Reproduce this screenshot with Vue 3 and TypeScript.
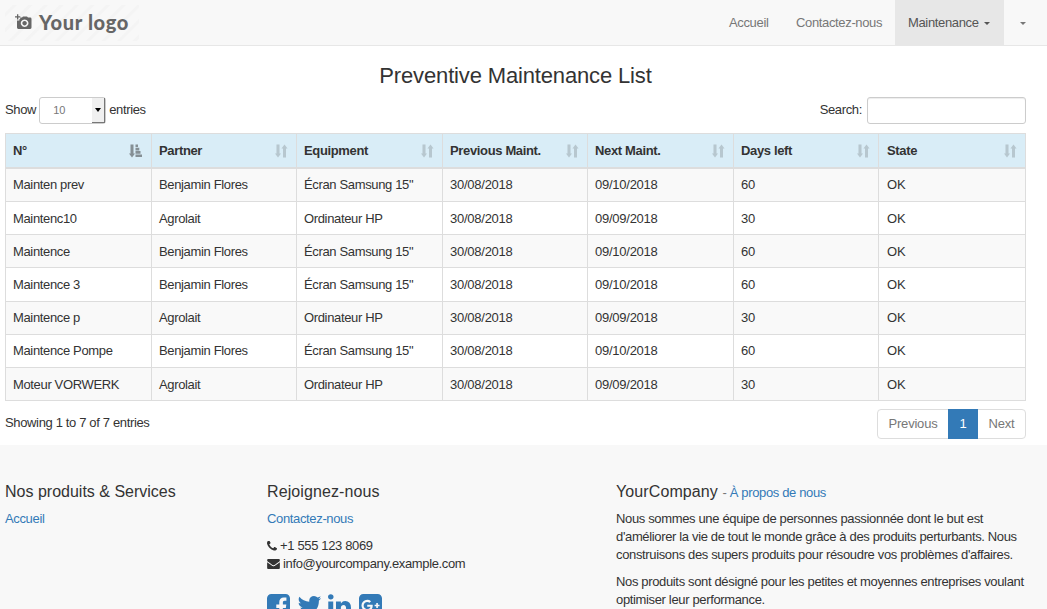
<script setup lang="ts">
interface Row {
  name: string
  partner: string
  equipment: string
  previous: string
  next: string
  days: number
  state: string
}

const columns: string[] = ['N°', 'Partner', 'Equipment', 'Previous Maint.', 'Next Maint.', 'Days left', 'State']

const flores = (name: string): Row => ({
  name, partner: 'Benjamin Flores', equipment: 'Écran Samsung 15"',
  previous: '30/08/2018', next: '09/10/2018', days: 60, state: 'OK',
})
const agrolait = (name: string): Row => ({
  name, partner: 'Agrolait', equipment: 'Ordinateur HP',
  previous: '30/08/2018', next: '09/09/2018', days: 30, state: 'OK',
})

const rows: Row[] = [
  flores('Mainten prev'),
  agrolait('Maintenc10'),
  flores('Maintence'),
  flores('Maintence 3'),
  agrolait('Maintence p'),
  flores('Maintence Pompe'),
  agrolait('Moteur VORWERK'),
]

const social: { name: string; path: string }[] = [
  { name: 'facebook', path: 'M1376 128q119 0 203.5 84.5t84.5 203.5v960q0 119-84.5 203.5t-203.5 84.5h-188v-595h199l30-232h-229v-148q0-56 23.5-84t91.5-28l122-1v-207q-63-9-178-9-136 0-217.5 80t-81.5 226v171h-200v232h200v595h-532q-119 0-203.5-84.5t-84.5-203.5v-960q0-119 84.5-203.5t203.5-84.5h960z' },
  { name: 'twitter', path: 'M1684 408q-67 98-162 167 1 14 1 42 0 130-38 259.5t-115.5 248.5-184.5 210.5-258 146-323 54.5q-271 0-496-145 35 4 78 4 225 0 401-138-105-2-188-64.5t-114-159.5q33 5 61 5 43 0 85-11-112-23-185.5-111.5t-73.5-205.5v-4q68 38 146 41-66-44-105-115t-39-154q0-88 44-163 121 149 294.5 238.5t371.5 99.5q-8-38-8-74 0-134 94.5-228.5t228.5-94.5q140 0 236 102 109-21 205-78-37 115-142 178 93-10 186-50z' },
  { name: 'linkedin', path: 'M477 625v991h-330v-991h330zm21-306q1 73-50.5 122t-135.5 49h-2q-82 0-132-49t-50-122q0-74 51.5-122.5t134.5-48.5 133 48.5 51 122.5zm1166 729v568h-329v-530q0-105-40.5-164.5t-126.5-59.5q-63 0-105.5 34.5t-63.5 85.5q-11 30-11 81v553h-329q2-399 2-647t-1-296l-1-48h329v144h-2q20-32 41-56t56.5-52 87-43.5 114.5-15.5q171 0 275 113.5t104 332.5z' },
  { name: 'google-plus', path: 'M1045 905q0-26-6-64h-362v132h217q-3 24-16.5 50t-37.5 53-66.5 44.5-96.5 17.5q-99 0-169-71t-70-171 70-171 169-71q92 0 153 59l104-101q-108-100-257-100-160 0-272 112.5t-112 271.5 112 271.5 272 112.5q165 0 266.5-105t101.5-270zm345 46h109v-110h-109v-110h-110v110h-110v110h110v110h110v-110zm274-535v960q0 119-84.5 203.5t-203.5 84.5h-960q-119 0-203.5-84.5t-84.5-203.5v-960q0-119 84.5-203.5t203.5-84.5h960q119 0 203.5 84.5t84.5 203.5z' },
]
</script>

<template>
  <div class="page">
    <header class="navbar">
      <a class="logo">
        <svg class="camera" viewBox="0 0 17 16">
          <path fill-rule="evenodd" d="M5.2 3.6H7L8 2.6h4l1 1h2.200q1.300 0 1.300 1.300v8.700q0 1.400-1.300 1.400H3.300Q2 15 2 13.600V6.600h2.400V5h.8zM9.600 5.400a3.800 3.800 0 1 0 .01 0zM9.600 7a2.200 2.200 0 1 1-.01 0z" />
          <path d="M2 .3h1.300v2H5.300v1.300H3.300v2H2V3.600H0V2.300H2z" />
        </svg>
        <span class="logo-text">Your logo</span>
      </a>
      <nav class="menu">
        <a class="item">Accueil</a>
        <a class="item">Contactez-nous</a>
        <a class="item active">Maintenance<i class="caret"></i></a>
        <a class="item"><i class="caret"></i></a>
      </nav>
    </header>

    <main class="content">
      <h3 class="title">Preventive Maintenance List</h3>
      <div class="controls">
        <div class="length">
          <span>Show</span>
          <div class="select"><span class="value">10</span><span class="arrow"><i></i></span></div>
          <span>entries</span>
        </div>
        <label class="search">Search:<input type="text" /></label>
      </div>

      <table class="list">
        <colgroup>
          <col class="first" /><col /><col class="wide" /><col /><col class="wide" /><col /><col class="last" />
        </colgroup>
        <thead>
          <tr>
            <th v-for="(column, i) in columns" :key="column">
              <div class="head">
                <span>{{ column }}</span>
                <svg v-if="i === 0" class="sort sorted" viewBox="0 0 13 14">
                  <path d="M1.500.5h3v9H6L3 13.500 0 9.500h1.500zM6.500.5h2.500v2.600H6.500zM6.500 3.800h3.800v2.600H6.500zM6.500 7.100h5v2.600h-5zM6.500 10.400H13V13H6.500z" />
                </svg>
                <svg v-else class="sort" viewBox="0 0 13 14">
                  <path d="M1.500.5h3v9H6L3 13.500 0 9.500h1.500zM8 13.500V4.500H6.500L9.500.5l3 4H11v9z" />
                </svg>
              </div>
            </th>
          </tr>
        </thead>
        <tbody>
          <tr v-for="row in rows" :key="row.name">
            <td>{{ row.name }}</td>
            <td>{{ row.partner }}</td>
            <td>{{ row.equipment }}</td>
            <td class="date">{{ row.previous }}</td>
            <td class="date">{{ row.next }}</td>
            <td class="date">{{ row.days }}</td>
            <td class="state">{{ row.state }}</td>
          </tr>
        </tbody>
      </table>

      <div class="summary">
        <span class="info">Showing 1 to 7 of 7 entries</span>
        <div class="pagination"><a class="prev">Previous</a><a class="current">1</a><a class="next">Next</a></div>
      </div>
    </main>

    <footer class="footer">
      <section class="products">
        <h4>Nos produits &amp; Services</h4>
        <a class="link">Accueil</a>
      </section>
      <section class="contact">
        <h4>Rejoignez-nous</h4>
        <a class="link">Contactez-nous</a>
        <div class="details">
          <div class="line">
            <svg class="phone" viewBox="192 256 1408 1280"><path d="M1600 1240q0 27-10 70.5t-21 68.5q-21 50-122 106-94 51-186 51-27 0-53-3.5t-57.5-12.5-47-14.5-55.5-20.5-49-18q-98-35-175-83-127-79-264-216t-216-264q-48-77-83-175-3-9-18-49t-20.5-55.5-14.5-47-12.5-57.5-3.5-53q0-92 51-186 56-101 106-122 25-11 68.5-21t70.5-10q14 0 21 3 18 6 53 76 11 19 30 54t35 63.500 31 53.500q3 4 17.500 25t21.500 35.500 7 28.500q0 20-28.500 50t-62 55-62 53-28.500 46q0 9 5 22.500t8.500 20.500 14 24 11.500 19q76 137 174 235t235 174q2 1 19 11.500t24 14 20.500 8.500 22.500 5q18 0 46-28.500t53-62 55-62 50-28.500q14 0 28.500 7t35.500 21.500 25 17.500q25 15 53.500 31t63.500 35 54 30q70 35 76 53 3 7 3 21z" /></svg>
            <span>+1 555 123 8069</span>
          </div>
          <div class="line">
            <svg class="envelope" viewBox="0 256 1792 1408"><path d="M1792 710v794q0 66-47 113t-113 47h-1472q-66 0-113-47t-47-113v-794q44 49 101 87 362 246 497 345 57 42 92.5 65.5t94.5 48 110 24.5h2q51 0 110-24.5t94.5-48 92.5-65.5q170-123 498-345 57-39 100-87zm0-294q0 79-49 151t-122 123q-376 261-468 325-10 7-42.5 31t-54 38.5-52 32.5-57.5 27-50 9h-2q-23 0-50-9t-57.5-27-52-32.5-54-38.5-42.5-31q-91-64-262-182.5t-205-142.5q-62-42-117-115.5t-55-136.5q0-78 41.5-130t118.5-52h1472q65 0 112.5 47t47.5 113z" /></svg>
            <span>info@yourcompany.example.com</span>
          </div>
        </div>
        <div class="social">
          <svg v-for="icon in social" :key="icon.name" :class="icon.name" viewBox="128 128 1536 1536"><path :d="icon.path" /></svg>
        </div>
      </section>
      <section class="about">
        <h4>YourCompany <small>- <a class="link">À propos de nous</a></small></h4>
        <p>Nous sommes une équipe de personnes passionnée dont le but est<br />d'améliorer la vie de tout le monde grâce à des produits perturbants. Nous<br />construisons des supers produits pour résoudre vos problèmes d'affaires.</p>
        <p>Nos produits sont désigné pour les petites et moyennes entreprises voulant<br />optimiser leur performance.</p>
      </section>
    </footer>
  </div>
</template>

<style>
body {
  overflow: hidden;
}
</style>

<style scoped>
.page {
  height: 609px;
  overflow: hidden;
  display: flex;
  flex-direction: column;
  background: #fff;
  color: #333;
  font: 13px/18px "Liberation Sans", Arial, sans-serif;
  letter-spacing: -0.35px;
}
.page * {
  box-sizing: border-box;
}
.navbar {
  flex: none;
  height: 46px;
  display: flex;
  justify-content: space-between;
  background: #f8f8f8;
  border-bottom: 1px solid #e7e7e7;
}
.logo {
  display: flex;
  align-items: center;
  width: 134px;
  height: 36px;
  margin: 5px 0 0 5px;
  padding-left: 10px;
  color: #666;
  background: repeating-linear-gradient(135deg, #f8f8f8 0 5px, #f4f4f4 6px 8px, #f8f8f8 9px 11px);
}
.camera {
  width: 17px;
  height: 16px;
  margin: 0 7px 2px 0;
  fill: #666;
}
.logo-text {
  margin-bottom: 2px;
  font: 900 20px/24px Lato, sans-serif;
  letter-spacing: 0.65px;
  white-space: nowrap;
}
.menu {
  display: flex;
}
.item {
  display: flex;
  align-items: center;
  width: 112px;
  padding-left: 13px;
  height: 45px;
  color: #777;
  white-space: nowrap;
}
.item:first-child {
  width: 67px;
}
.item.active {
  width: 109px;
  background: #e7e7e7;
  color: #555;
}
.caret {
  width: 0;
  border: 3px solid transparent;
  border-top-color: currentColor;
  border-bottom: 0;
  margin: 2px 0 0;
}
.item.active .caret {
  margin-left: 5px;
}
.item:last-child {
  width: 43px;
  padding-left: 16px;
}
.content {
  flex: none;
  width: 1021px;
  height: 399px;
  margin-left: 5px;
}
.title {
  margin: 0;
  padding-top: 17px;
  font-size: 22px;
  line-height: 26px;
  font-weight: 400;
  letter-spacing: -0.15px;
  text-align: center;
}
.controls {
  display: flex;
  justify-content: space-between;
  margin-top: 8px;
  height: 27px;
}
.length,
.search {
  display: flex;
  line-height: 25px;
}
.select {
  display: flex;
  justify-content: space-between;
  width: 67px;
  height: 27px;
  margin: 0 3px;
  border: 1px solid #ccc;
  border-radius: 3px;
  background: #fff;
  font-size: 11px;
  letter-spacing: 0;
  color: #777;
}
.value {
  padding-left: 13px;
}
.arrow {
  display: flex;
  align-items: center;
  justify-content: center;
  width: 13px;
  background: #f0f0f0;
  border-right: 1px solid #777;
  border-bottom: 1px solid #777;
}
.arrow i {
  border: 3px solid transparent;
  border-top: 4px solid #000;
  border-bottom: 0;
}
.search input {
  width: 159px;
  height: 27px;
  margin: 0 0 0 5px;
  border: 1px solid #ccc;
  border-radius: 3px;
  background: #fff;
  box-shadow: inset 0 1px 1px rgba(0, 0, 0, 0.075);
}
.list {
  width: 1021px;
  margin-top: 9px;
  table-layout: fixed;
  border-collapse: separate;
  border-spacing: 0;
  border-top: 1px solid #ddd;
}
col { width: 145px; }
col.first { width: 147px; }
col.wide { width: 146px; }
col.last { width: 147px; }
th,
td {
  padding: 0 7px;
  text-align: left;
  border-right: 1px solid #ddd;
  border-bottom: 1px solid #ddd;
}
th:first-child,
td:first-child {
  border-left: 1px solid #ddd;
}
th:last-child,
td:last-child {
  padding-left: 8px;
}
th {
  height: 35px;
  border-bottom-width: 2px;
  background: #d9edf7;
}
td {
  height: 33px;
  padding-bottom: 1px;
}
.date {
  letter-spacing: -0.25px;
}
.state {
  letter-spacing: 0;
}
tbody tr:nth-child(2) td,
tbody tr:nth-child(3) td,
tbody tr:nth-child(4) td,
tbody tr:nth-child(7) td {
  padding-top: 1px;
  padding-bottom: 0;
}
tbody tr:nth-child(4) td {
  height: 34px;
}
tbody tr:nth-child(odd) {
  background: #f9f9f9;
}
.head {
  display: flex;
  align-items: center;
  justify-content: space-between;
}
.sort {
  width: 13px;
  height: 14px;
  margin-right: 1px;
  fill: #333;
  opacity: 0.2;
}
.sort.sorted {
  margin-right: 2px;
  opacity: 0.5;
}
.summary {
  display: flex;
  justify-content: space-between;
  margin-top: 8px;
}
.info {
  margin-top: 5px;
}
.pagination {
  display: flex;
  height: 30px;
  line-height: 28px;
  color: #777;
  letter-spacing: -0.2px;
}
.pagination a {
  border: 1px solid #ddd;
  text-align: center;
}
.prev {
  width: 72px;
  margin-right: -1px;
  border-radius: 4px 0 0 4px;
}
.pagination .current {
  width: 30px;
  position: relative;
  background: #337ab7;
  border-color: #337ab7;
  color: #fff;
}
.next {
  width: 49px;
  margin-left: -1px;
  border-radius: 0 4px 4px 0;
}
.footer {
  flex: 1;
  display: grid;
  grid-template-columns: 262px 349px 425px;
  padding: 38px 0 0 5px;
  background: #f8f8f8;
}
.footer h4 {
  margin: 0 0 9px;
  font-size: 16px;
  line-height: 18px;
  font-weight: 400;
  letter-spacing: 0;
}
.contact h4,
.about h4 {
  letter-spacing: 0.1px;
}
.footer .about h4 {
  margin-bottom: 8px;
}
.footer small {
  font-size: 13px;
  letter-spacing: -0.35px;
  color: #777;
}
.footer p {
  margin: 0 0 9px;
  white-space: nowrap;
}
.link {
  color: #337ab7;
}
.details {
  margin-top: 9px;
}
.line {
  display: flex;
  align-items: center;
  gap: 3px;
}
.line svg {
  fill: #333;
}
.phone {
  width: 10px;
  height: 10px;
}
.envelope {
  width: 13px;
  height: 10px;
}
.social {
  display: flex;
  gap: 7.700px;
  margin-top: 21px;
}
.social svg {
  width: 23px;
  height: 23px;
  fill: #337ab7;
}
</style>
